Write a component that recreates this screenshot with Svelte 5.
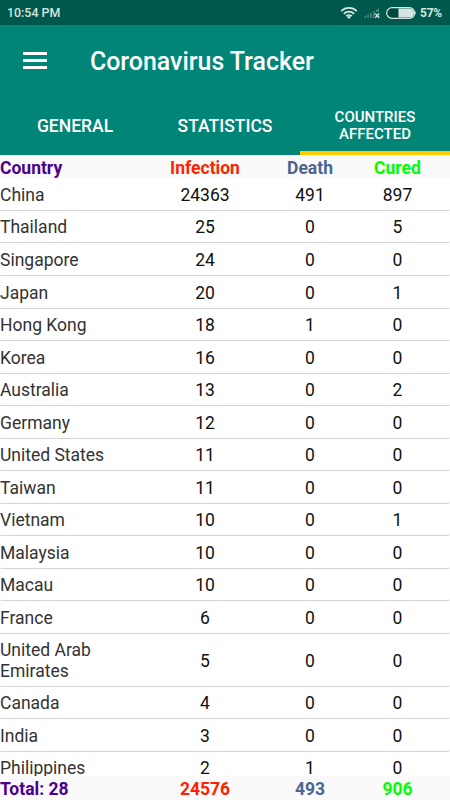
<script lang="ts">
  type Row = { name: string; infection: number; death: number; cured: number };

  const tabs = ['General', 'Statistics', 'Countries affected'];
  let active = $state(2);

  const rows: Row[] = [
    { name: 'China', infection: 24363, death: 491, cured: 897 },
    { name: 'Thailand', infection: 25, death: 0, cured: 5 },
    { name: 'Singapore', infection: 24, death: 0, cured: 0 },
    { name: 'Japan', infection: 20, death: 0, cured: 1 },
    { name: 'Hong Kong', infection: 18, death: 1, cured: 0 },
    { name: 'Korea', infection: 16, death: 0, cured: 0 },
    { name: 'Australia', infection: 13, death: 0, cured: 2 },
    { name: 'Germany', infection: 12, death: 0, cured: 0 },
    { name: 'United States', infection: 11, death: 0, cured: 0 },
    { name: 'Taiwan', infection: 11, death: 0, cured: 0 },
    { name: 'Vietnam', infection: 10, death: 0, cured: 1 },
    { name: 'Malaysia', infection: 10, death: 0, cured: 0 },
    { name: 'Macau', infection: 10, death: 0, cured: 0 },
    { name: 'France', infection: 6, death: 0, cured: 0 },
    { name: 'United Arab Emirates', infection: 5, death: 0, cured: 0 },
    { name: 'Canada', infection: 4, death: 0, cured: 0 },
    { name: 'India', infection: 3, death: 0, cured: 0 },
    { name: 'Philippines', infection: 2, death: 1, cured: 0 },
  ];
</script>

<div class="screen">
  <div class="status-bar">
    <span class="clock">10:54 PM</span>
    <svg class="wifi" width="18" height="14" viewBox="0 0 18 14" fill="none" stroke="#d5e5e2" stroke-width="1.7">
      <path d="M1.2 5.2a11 11 0 0 1 15.6 0" />
      <path d="M3.8 7.8a7.4 7.4 0 0 1 10.4 0" />
      <path d="M6.2 10.2a4 4 0 0 1 5.6 0" />
      <path d="M7 11.1a2.8 2.8 0 0 1 4 0l-2 2z" fill="#d5e5e2" stroke="none" />
    </svg>
    <svg class="signal" width="17" height="12" viewBox="0 0 17 12">
      <path d="M0 11V9.6l2-1V11zM3 11V8.1l2-1V11zM6 11V6.4l2-1.1V11zM9 11V4.6l2-1.2V11zM12 5V2.8l3-1.7V5z" fill="#3f7f74" />
      <path d="M11.3 6.5l4 4.2M15.3 6.5l-4 4.2" stroke="#d5e5e2" stroke-width="1.3" />
    </svg>
    <svg class="battery" width="31" height="12" viewBox="0 0 31 12">
      <rect x=".7" y=".7" width="28" height="10.6" rx="5.3" fill="#00483d" stroke="#d5e5e2" stroke-width="1.2" />
      <path d="M12.5 1.5H23.5a4.5 4.5 0 0 1 0 9H12.5z" fill="#d5e5e2" />
      <path d="M29.2 4q1.6 2 0 4z" fill="#d5e5e2" />
    </svg>
    <span class="percent">57%</span>
  </div>

  <header>
    <button class="menu" aria-label="Menu">
      <span></span>
      <span></span>
      <span></span>
    </button>
    <h1>Coronavirus Tracker</h1>
  </header>

  <nav>
    {#each tabs as tab, i}
      <button class="tab" class:active={active === i} class:long={tab.length > 12} onclick={() => (active = i)}>
        <span>{tab}</span>
      </button>
    {/each}
  </nav>

  <div class="grid summary">
    <span class="country">Country</span>
    <span class="infection">Infection</span>
    <span class="death">Death</span>
    <span class="cured">Cured</span>
  </div>

  <main>
    {#each rows as row}
      <div class="grid row">
        <span class="name">{row.name}</span>
        <span>{row.infection}</span>
        <span>{row.death}</span>
        <span>{row.cured}</span>
      </div>
    {/each}
  </main>

  <div class="grid summary">
    <span class="country">Total: 28</span>
    <span class="infection">24576</span>
    <span class="death">493</span>
    <span class="cured">906</span>
  </div>
</div>

<style>
  :global(body) {
    margin: 0;
  }
  .screen {
    display: flex;
    flex-direction: column;
    height: 800px;
    overflow: hidden;
    background: #fafafa;
    font-family: Roboto, sans-serif;
  }
  .status-bar {
    display: flex;
    align-items: center;
    flex: none;
    box-sizing: border-box;
    height: 25px;
    padding: 0 8px 0 7px;
    background: #00574b;
    color: #d5e5e2;
    font-size: 12.4px;
    font-weight: 500;
  }
  .clock {
    margin-right: auto;
  }
  .wifi {
    margin-right: 6px;
  }
  .signal {
    margin-right: 5px;
  }
  .battery {
    margin-right: 3px;
  }
  .percent {
    font-size: 12px;
    font-weight: 700;
    letter-spacing: -0.2px;
  }
  header {
    display: flex;
    align-items: center;
    flex: none;
    height: 70px;
    background: #008577;
  }
  button {
    padding: 0;
    border: 0;
    background: none;
    color: #fff;
    font-family: inherit;
  }
  .menu {
    display: flex;
    flex-direction: column;
    gap: 4px;
    width: 24px;
    margin: 0 43px 0 23px;
  }
  .menu span {
    height: 3px;
    background: #fff;
  }
  h1 {
    margin: 3px 0 0;
    color: #fff;
    font-size: 24.9px;
    font-weight: 500;
  }
  nav {
    display: flex;
    flex: none;
    height: 60px;
    background: #008577;
  }
  .tab {
    flex: 1;
    box-sizing: border-box;
    padding: 6px 25px 0;
    border-bottom: 4px solid transparent;
    font-size: 17.5px;
    font-weight: 500;
    line-height: 17px;
    text-transform: uppercase;
  }
  .tab.long {
    font-size: 15px;
  }
  .tab.active {
    border-bottom-color: #ffcc00;
  }
  .grid {
    display: grid;
    grid-template-columns: 150px 110px 100px 75px;
    align-items: center;
    text-align: center;
  }
  .summary {
    flex: none;
    box-sizing: border-box;
    height: 24px;
    padding-top: 2px;
    font-size: 17.5px;
    font-weight: 700;
  }
  .country {
    color: #4b0092;
    text-align: left;
  }
  .infection {
    color: #ff2200;
  }
  .death {
    color: #4a6590;
  }
  .cured {
    color: #00ff00;
  }
  main {
    flex: 1;
    min-height: 0;
    margin-top: -0.6px;
    overflow: hidden;
  }
  .row {
    box-sizing: border-box;
    min-height: 32.54px;
    padding: 6.5px 0 4.5px;
    border-bottom: 1px solid #d5d5d5;
    border-radius: 2px;
    background: #fff;
    color: #111;
    font-size: 17.5px;
    line-height: 20.5px;
  }
  .name {
    color: #333;
    text-align: left;
  }
</style>
